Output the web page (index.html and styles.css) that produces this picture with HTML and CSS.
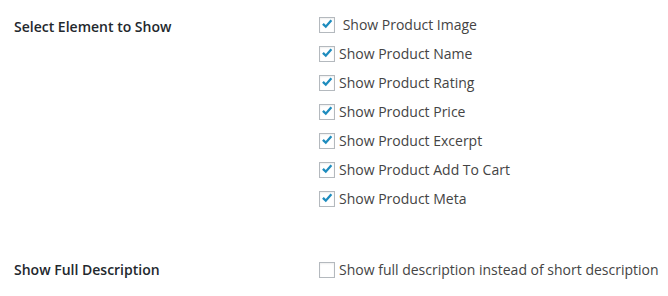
FILE: index.html
```html
<!DOCTYPE html>
<html lang="en">
<head>
  <meta charset="UTF-8" />
  <title>Settings</title>
  <link rel="stylesheet" href="styles.css">
</head>
<body>
  <div class="form-table">

    <!-- Elements -->
    <div class="row first">
      <div class="th">Select Element to Show</div>
      <div class="td">
        <label class="check"><span class="box on"><svg viewBox="0 0 16 16"><path d="M2.4 8.2 L4.3 6.4 L6.6 8.7 L12 2.4 L14 4.1 L6.7 12.4 Z"/></svg></span> Show Product Image</label>
        <label class="check"><span class="box on"><svg viewBox="0 0 16 16"><path d="M2.4 8.2 L4.3 6.4 L6.6 8.7 L12 2.4 L14 4.1 L6.7 12.4 Z"/></svg></span>Show Product Name</label>
        <label class="check"><span class="box on"><svg viewBox="0 0 16 16"><path d="M2.4 8.2 L4.3 6.4 L6.6 8.7 L12 2.4 L14 4.1 L6.7 12.4 Z"/></svg></span>Show Product Rating</label>
        <label class="check"><span class="box on"><svg viewBox="0 0 16 16"><path d="M2.4 8.2 L4.3 6.4 L6.6 8.7 L12 2.4 L14 4.1 L6.7 12.4 Z"/></svg></span>Show Product Price</label>
        <label class="check"><span class="box on"><svg viewBox="0 0 16 16"><path d="M2.4 8.2 L4.3 6.4 L6.6 8.7 L12 2.4 L14 4.1 L6.7 12.4 Z"/></svg></span>Show Product Excerpt</label>
        <label class="check"><span class="box on"><svg viewBox="0 0 16 16"><path d="M2.4 8.2 L4.3 6.4 L6.6 8.7 L12 2.4 L14 4.1 L6.7 12.4 Z"/></svg></span>Show Product Add To Cart</label>
        <label class="check"><span class="box on"><svg viewBox="0 0 16 16"><path d="M2.4 8.2 L4.3 6.4 L6.6 8.7 L12 2.4 L14 4.1 L6.7 12.4 Z"/></svg></span>Show Product Meta</label>
      </div>
    </div>

    <!-- Description -->
    <div class="row second">
      <div class="th">Show Full Description</div>
      <div class="td">
        <label class="check"><span class="box"></span>Show full description instead of short description</label>
      </div>
    </div>

  </div>
</body>
</html>
```

FILE: styles.css
```css
body {
  margin: 0;
  background-color: #fff;
  font-family: "Open Sans", sans-serif;
  font-size: 14px;
  color: #444;
}

.form-table {
  padding: 10px 0 0 14px;
}

.row {
  display: flex;
}

.row.first .th {
  padding-top: 2px;
}

.row.second {
  margin-top: 42px;
}

.th {
  width: 305px;
  flex-shrink: 0;
  font-size: 14px;
  font-weight: 600;
  color: #23282d;
  line-height: 29px;
}

.td {
  display: flex;
  flex-direction: column;
}

.check {
  display: flex;
  align-items: center;
  height: 29px;
  white-space: pre;
}

.box {
  width: 16px;
  height: 16px;
  box-sizing: border-box;
  border: 1px solid #b4b9be;
  background-color: #fff;
  box-shadow: inset 0 1px 2px rgba(0, 0, 0, 0.07);
  margin-right: 4px;
  display: flex;
  align-items: center;
  justify-content: center;
}

.box svg {
  width: 15px;
  height: 15px;
  fill: #1e8cbe;
}
```
